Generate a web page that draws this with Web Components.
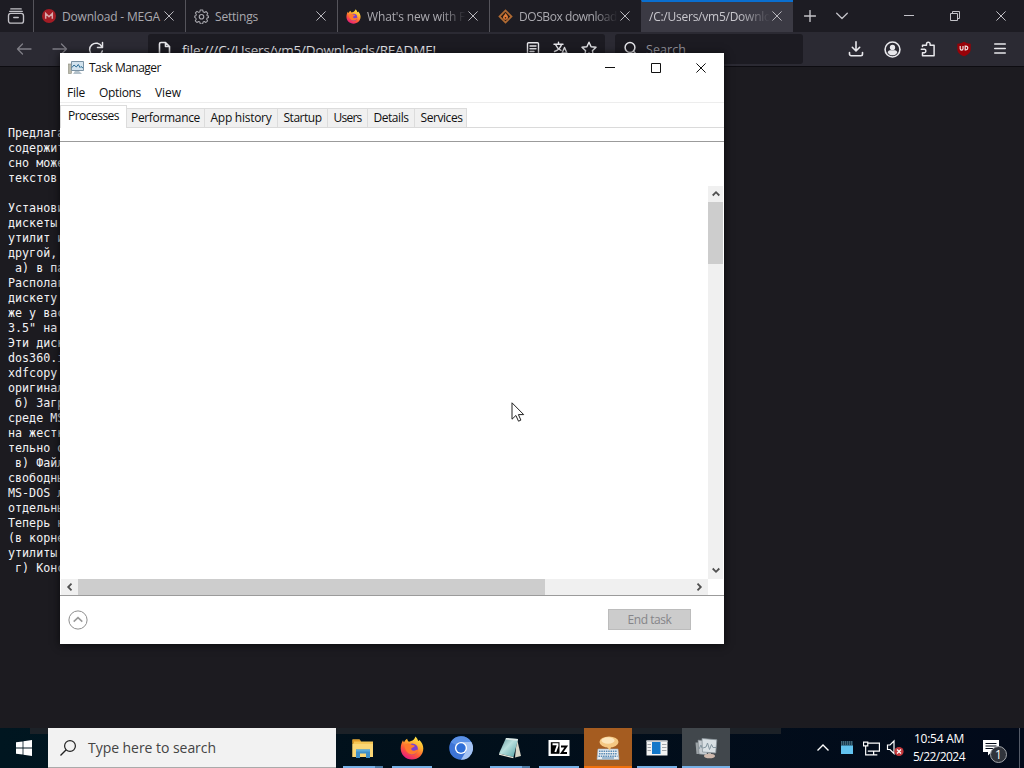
<!DOCTYPE html>
<html lang="en">
<head>
<meta charset="utf-8">
<title>Desktop</title>
<style>
html,body{margin:0;width:1024px;height:768px;overflow:hidden;background:#1c1b20;font-family:"Open Sans","Noto Sans",sans-serif;font-size:12px}
</style>
</head>
<body>
<desk-top></desk-top>
<script>
const define = (name, html, setup) => customElements.define(name, class extends HTMLElement {
  connectedCallback() {
    if (this.shadowRoot) return;
    const t = document.createElement('template');
    t.innerHTML = html;
    this.attachShadow({mode: 'open'}).append(t.content.cloneNode(true));
    if (setup) setup(this, this.shadowRoot);
  }
});

/* Text whose letter spacing adapts so that it takes up the width given in "w". */
define('ui-label', `<style>:host{display:block;white-space:pre;line-height:1.35;flex:none}:host([low]){padding-top:2px}span{display:inline-block}</style><span><slot></slot></span>`,
  (el, root) => {
    const w = +el.getAttribute('w');
    if (!w) return;
    const s = root.querySelector('span');
    const n = el.textContent.length;
    s.style.letterSpacing = ((w - s.getBoundingClientRect().width) / n).toFixed(3) + 'px';
    el.style.width = w + 'px';
  });

const line = (d, w = 1.3) => `<path d="${d}" fill="none" stroke="currentColor" stroke-width="${w}" stroke-linecap="round" stroke-linejoin="round"/>`;
const firefox = `<defs><linearGradient id="a" x1=".8" y1="0" x2=".25" y2="1"><stop offset="0" stop-color="#fff04a"/><stop offset=".35" stop-color="#ffb02e"/><stop offset=".65" stop-color="#ff5a36"/><stop offset="1" stop-color="#e31587"/></linearGradient></defs><path d="M12.5 4.5C14 3.5 15 2 15.5.5c1.5 1.5 2.300 3 2.700 4.500.8-.1 1-.6 1.200-1C22 6.500 23.300 9.500 23.300 12.500 23.300 19 18.300 23.500 12 23.500S.7 18.700.7 12.500c0-3.500 1-6 2.300-8.300.2 1 .6 1.600 1 2C5 4.500 6 3.500 7.200 2.800c.1 1.300.8 2.400 1.800 2.900z" fill="url(#a)"/><circle cx="12.300" cy="13" r="5.600" fill="#7a3fd0"/><path d="M4.500 9.500c2-2.300 5-2.500 7-.8 1.800.2 3 .6 3.300 1.300-.6 1.200-2.400 1.300-3.300 2.300-.8 1.300.6 2.500 2.500 2.400 2-.2 3.400-1.300 4.500-.6-1.200 3-4 4.600-7 4.300-4.200-.4-6.500-4.300-7-8.900z" fill="#ff7a2c"/>`;
const ICONS = {
  tabs: [24, line('M5 2.500h14M3.500 5.800h17', 1.600) + `<rect x="2" y="8.500" width="20" height="13" rx="3" fill="none" stroke="currentColor" stroke-width="1.800"/>` + line('M9 14h6', 1.800)],
  mega: [14, `<circle cx="7" cy="7" r="7" fill="#a31c25"/><path d="M3.700 9.700V4.500L7 7.700l3.300-3.200v5.200" fill="none" stroke="#d9a9ab" stroke-width="1.500"/>`],
  gear: [16, `<path d="M6.700 1h2.600l.4 2 1.500.7 1.800-1 1.700 1.900-1 1.700.5 1 1.500.3v1.500l-1.800.6-.4 1.200 1 1.800-1.800 1.700-1.700-1-1.300.5-.5 2H6.700l-.5-2-1.300-.5-1.800 1-1.700-1.800 1-1.700-.5-1.200L.8 9V7.500l1.200-.4.5-1.200-1-1.700L3.200 2.500l1.700 1.100 1.300-.5z" fill="none" stroke="currentColor" stroke-width="1.100" stroke-linejoin="round"/><circle cx="8" cy="8.200" r="2.400" fill="none" stroke="currentColor" stroke-width="1.200"/>`],
  firefox: [24, firefox],
  dosbox: [16, `<path d="M8 .3 15.700 8 8 15.700.3 8z" fill="#b06a33"/><path d="M8 3 13 8 8 13 3 8z" fill="#2b1c14"/><path d="M8 4c.2 1.600 3 2.700 2.600 5.200C10.300 10.700 9 11.500 8 11.500s-2.700-.8-2.700-2.500C5.300 7.200 7.500 6.500 8 4z" fill="#e07b37"/><circle cx="8" cy="9.300" r=".9" fill="#2b1c14"/>`],
  close: [10, line('M.7.7l8.600 8.600M9.300.7.7 9.300', 1)],
  plus: [12, line('M6 .5v11M.5 6h11', 1.400)],
  down: [12, line('M.7 3.300 6 8.500l5.300-5.200', 1.300)],
  min: [10, `<path d="M0 4h10v1H0z" fill="currentColor"/>`],
  restore: [10, `<path d="M.5 2.500h7v7h-7zM2.500 2.500v-2h7v7h-2" fill="none" stroke="currentColor"/>`],
  max: [10, `<path d="M.5.5h9v9h-9z" fill="none" stroke="currentColor"/>`],
  back: [16, line('M1.500 8h13.500M6.500 3l-5 5 5 5', 1.300)],
  forward: [16, line('M14.500 8H1M9.500 3l5 5-5 5', 1.300)],
  reload: [16, line('M14.500 1.500v5h-5M13.900 6A6.400 6.400 0 1 0 14.300 10', 1.500)],
  page: [16, line('M3.500 14.500V3a1.500 1.500 0 0 1 1.500-1.500h4.500L13.500 5.500v9zM9.500 1.500v4h4', 1.600)],
  reader: [16, line('M3.500 1.700h9a1 1 0 0 1 1 1v10.600a1 1 0 0 1-1 1h-9a1 1 0 0 1-1-1V2.700a1 1 0 0 1 1-1zM5 5h6M5 7.700h6M5 10.500h4', 1.400)],
  translate: [16, line('M1 3.200h9M5.500 1.200v2M8.500 3.500C7.500 7 4.500 9.500 1.500 10.500M2.800 4C4 7 6 8.500 8 9.300M8 14.500l3.500-8 3.500 8M9.200 12h4.600', 1.400)],
  star: [16, line('M8 1.200l2.100 4.500 4.900.6-3.600 3.400.9 4.900L8 12.200l-4.300 2.400.9-4.900L1 6.300l4.900-.6z', 1.400)],
  search: [16, `<circle cx="7" cy="6.500" r="4.900" fill="none" stroke="currentColor" stroke-width="1.500"/>` + line('M10.500 10.200l4 4.300', 1.500)],
  download: [16, line('M8 .8v8.900M4.300 6.300 8 10l3.700-3.700M1.500 11.500v1.500a1.700 1.700 0 0 0 1.700 1.700h9.600a1.700 1.700 0 0 0 1.700-1.700v-1.500', 1.600)],
  account: [16, `<circle cx="8" cy="8" r="7" fill="none" stroke="currentColor" stroke-width="1.500"/><circle cx="8" cy="6" r="2.500" fill="currentColor"/><path d="M3.500 11c0-1.500 1-2.300 2.200-2.300h4.600c1.200 0 2.200.8 2.200 2.300-1 1.500-2.500 2.500-4.500 2.500S4.500 12.500 3.500 11z" fill="currentColor"/>`],
  puzzle: [16, line('M2.500 5.500V4.300h4V3a1.800 1.800 0 0 1 3.600 0v1.300h4v10.400H2.500v-3H4.500a1.800 1.800 0 0 0 0-3.500H1.300', 1.500)],
  ublock: [16, `<path d="M8 .8c2 1.300 4 1.900 6.700 1.900v5.200c0 3.500-2.500 5.700-6.700 7.400-4.200-1.700-6.700-3.900-6.700-7.400V2.700C4 2.700 6 2.100 8 .8z" fill="#980208"/><path d="M4.200 5v2.700a1.400 1.400 0 0 0 2.800 0V5M9.200 5.100v3.800h.7a1.900 1.900 0 0 0 0-3.800z" fill="none" stroke="#f0e4e4" stroke-width="1.200"/>`],
  menu: [12, line('M.7 1h10.600M.7 5.500h10.600M.7 10h10.600', 1.500)],
  tm: [16, `<rect x=".5" y="4" width="3" height="9.500" fill="#b9b9ac" stroke="#8a8a7c" stroke-width=".6"/><path d="M3.500 1.500h12v9h-12z" fill="#d3e3ee" stroke="#7b92a3"/><path d="M4 7.500l2-2.500 2.300 2 2-2.500 1.700 3 1-1 2 1.500" fill="none" stroke="#2c6d94" stroke-width="1"/><path d="M7 11h4l3 3H5z" fill="#b3c1ca"/>`],
  circleup: [20, `<circle cx="10" cy="10" r="9.100" fill="none" stroke="#8e8e8e" stroke-width="1"/><path d="M5.700 11.700 10 7.700l4.300 4" fill="none" stroke="#999" stroke-width="1.600"/>`],
  aup: [8, `<path d="M.7 5.500 4 2.200l3.300 3.300" fill="none" stroke="#505050" stroke-width="1.800"/>`],
  adown: [8, `<path d="M.7 2.500 4 5.800l3.300-3.300" fill="none" stroke="#505050" stroke-width="1.800"/>`],
  aleft: [8, `<path d="M5.500.7 2.200 4l3.300 3.300" fill="none" stroke="#505050" stroke-width="1.800"/>`],
  aright: [8, `<path d="M2.500.7 5.800 4 2.500 7.300" fill="none" stroke="#505050" stroke-width="1.800"/>`],
  win: [16, `<path d="M0 2.300 6.600 1.400v6.200H0zM7.400 1.300 16 0v7.600H7.400zM0 8.400h6.600v6.200L0 13.700zM7.400 8.400H16V16l-8.600-1.300z" fill="#fff"/>`],
  lens: [16, `<circle cx="10" cy="6" r="5.400" fill="none" stroke="#222" stroke-width="1.200"/><path d="M6.200 9.800.5 15.500" stroke="#222" stroke-width="1.300"/>`],
  explorer: [24, `<path d="M1.500 3.500h7l1.500 2h12v15.500h-20.500z" fill="#f6c755"/><path d="M1.500 3.500h7l1.500 2H3v2H1.500z" fill="#e09a28"/><path d="M1.500 8h20.500v13H1.500z" fill="#fbd775"/><path d="M5 22v-8.500h14V22h-4v-4.500H9V22z" fill="#3f8fc8"/><path d="M5 13.500h14v2H5z" fill="#5aaadb"/>`],
  chromium: [24, `<circle cx="12" cy="12" r="11.800" fill="#3d74d6"/><path d="M12 6h10.400A11.800 11.800 0 0 1 12 23.800L17.200 15z" fill="#a5c4f4"/><path d="M12 .2A11.800 11.800 0 0 1 22.300 6H12a6 6 0 0 0-5.200 3L1.700 6.200A11.800 11.800 0 0 1 12 .2z" fill="#5b91e6"/><circle cx="12" cy="12" r="6.100" fill="#fff"/><circle cx="12" cy="12" r="4.700" fill="#2f6fd8"/>`],
  notepad: [24, `<defs><linearGradient id="n" x1="0" y1="0" x2="1" y2="1"><stop offset="0" stop-color="#5d9298"/><stop offset=".45" stop-color="#b9e0de"/><stop offset="1" stop-color="#4f9da1"/></linearGradient></defs><path d="M19 3l4 17-6 1.500z" fill="#d8d6c8"/><path d="M8 2l12 1-4.500 18L1 17.500z" fill="url(#n)"/><path d="M8 2l12 1-.4 1.700-12-1.200z" fill="#dfe9e7"/><path d="M1 17.500 15.500 21l-.2 1.300L1 18.700z" fill="#eceade"/>`],
  seven: [24, `<path d="M1.500 4h21v16h-21z" fill="#fff"/><path d="M3.800 6.200h8.700v11.600H3.800z" fill="#000"/><path d="M5.500 8.300h5v1.500L8.300 16" fill="none" stroke="#fff" stroke-width="1.900"/><path d="M14 10.500h5.300L14.700 17H20" fill="none" stroke="#000" stroke-width="1.900"/>`],
  keyboard: [24, `<path d="M2 13h20l1 10.500H1z" fill="#e9edf0" stroke="#a0b4c4" stroke-width=".6"/><path d="M3 15.200h18M3 17.800h18M2.500 20.200h19" stroke="#5689b5" stroke-width="1.500" stroke-dasharray="1.500 .8"/><path d="M6 22h12" stroke="#5689b5" stroke-width="1"/><ellipse cx="13" cy="6" rx="9.500" ry="5.600" fill="#f5c883"/><ellipse cx="12" cy="4.500" rx="6.500" ry="3.300" fill="#fde6bc"/><path d="M11 11h4l-1 3.500z" fill="#f5c883"/>`],
  app: [24, `<path d="M1.500 4.500h21v15h-21z" fill="#f3f3f3"/><path d="M1.500 4.500h21V6h-21z" fill="#c9cdd0"/><path d="M7 6h8.500v12H7z" fill="#1277c9"/><path d="M2.500 8.500H6M2.500 11.500H6M2.500 14.500H6M17 8.500h4.500M17 11.500h4.500M17 14.500h4.500" stroke="#a2a6aa" stroke-width="1"/>`],
  tmbig: [24, `<path d="M1.500 6.500h4L6 18H2.500z" fill="#9ca3a7"/><path d="M4 4l9 1v14l-8-1z" fill="#c5cbd0" stroke="#737c82" stroke-width=".6"/><path d="M8 2.500 22.800 3.800 21.700 17 8.500 16z" fill="#d9e0e4" stroke="#8c969c" stroke-width=".8"/><path d="M9 12l3-1 1.500-4 2 6.500 2-5 1.500 3h3M5 13l2-4 1 3" fill="none" stroke="#8496a0" stroke-width="1"/><path d="M14 17h3v2h-3z" fill="#aaa"/><ellipse cx="15.500" cy="20" rx="5.500" ry="2.300" fill="#cfb9ad"/>`],
  up: [12, `<path d="M.5 8.500 6 3l5.500 5.500" fill="none" stroke="#fff" stroke-width="1.400"/>`],
  tray: [14, `<path d="M1 0h12v13H1z" fill="#62c3ef"/><path d="M1 0h12v4.500H1z" fill="#183d52"/><path d="M1 1h12M1 3h12" stroke="#88a4b0" stroke-width=".8" stroke-dasharray="1 1"/>`],
  net: [16, `<path d="M4.500 3h11v7.500h-11M10 10.500v3M6.500 14h7" fill="none" stroke="#fff" stroke-width="1.200"/><path d="M.5 2h4v3.500h-4zM2.500 5.500V14h4" fill="none" stroke="#fff" stroke-width="1.100"/>`],
  sound: [18, `<path d="M1.500 6H4l4-4v12.500L4 10.500H1.500z" fill="none" stroke="#fff" stroke-width="1.200"/><circle cx="13" cy="12.500" r="4.600" fill="#c3373b"/><path d="M11 10.500l4 4M15 10.500l-4 4" stroke="#fff" stroke-width="1.200"/>`],
  note: [16, `<path d="M0 0h16v12H8.500L5 15.500V12H0z" fill="#fff"/><path d="M2.500 3.500h11M2.500 6h11M2.500 8.500h8" stroke="#020a18" stroke-width="1.200"/>`],
  cursor: [20, `<path d="M1 .8v16.400l3.900-3.700 2.600 5.700 2.400-1.100-2.500-5.500h5.300z" fill="#fff" stroke="#222" stroke-width="1" stroke-linejoin="round"/>`]
};
define('ui-icon', `<style>:host{display:block;flex:none;line-height:0}svg{display:block}</style>`, (el, root) => {
  const [box, body] = ICONS[el.getAttribute('name')];
  const s = el.getAttribute('size') || box;
  root.innerHTML += `<svg width="${s}" height="${s}" viewBox="0 0 ${box} ${box}">${body}</svg>`;
});

define('ui-button', `<style>:host{display:flex;align-items:center;justify-content:center;flex:none;width:36px;height:100%}</style><slot></slot>`);

define('browser-tab', `<style>
:host{display:flex;align-items:center;box-sizing:border-box;width:152px;height:32px;padding:0 11px 0 8px;border-left:1px solid #55545b;color:#aaa9af;overflow:hidden;flex:none}
:host([active]){background:#3b3a44;border-left-color:#3b3a44;border-top:2px solid #0a6fd0;padding:0 11px 2px 7px;color:#c8c7cd}
::slotted([slot=icon]){margin-right:6px}
.t{flex:1;min-width:0;overflow:hidden;margin-right:2px}
:host([fade]) .t{-webkit-mask-image:linear-gradient(90deg,#000 75%,transparent);mask-image:linear-gradient(90deg,#000 75%,transparent)}
ui-icon.x{color:#b9b8be}
</style><slot name="icon"></slot><div class="t"><slot></slot></div><ui-icon class="x" name="close"></ui-icon>`);

define('browser-field', `<style>:host{display:flex;align-items:center;box-sizing:border-box;height:30px;background:#1c1b22;border-radius:3px;padding-left:8px;flex:none;color:#e6e6ea}</style><slot></slot>`);

define('browser-window', `<style>
:host{display:flex;flex-direction:column;height:728px}
.tabs{display:flex;height:32px;background:#1d1c23;color:#c3c2c8}
.nav{display:flex;height:35px;background:#2b2a33;color:#e8e8ec;align-items:center;border-bottom:1px solid #0d0c11;box-sizing:border-box;padding-left:6px}
.dim{color:#7f7e86}
.sp{flex:1}
.url{width:457px;margin-left:34px}
.url .ic{display:flex;gap:12px;margin-left:89px}
.url ui-label{margin-left:10px}
.search{width:188px;margin-left:10px}
.search ui-label{margin-left:7px;color:#96959d}
pre{margin:0;padding:59px 0 0 8px;font:11.7px/15px "DejaVu Sans Mono","Liberation Mono",monospace;color:#f2f2f4;flex:1}
</style>
<div class="tabs">
<ui-button style="width:32px;margin-right:1px"><ui-icon name="tabs" size="18"></ui-icon></ui-button>
<browser-tab><ui-icon slot="icon" name="mega"></ui-icon><ui-label low w="98">Download - MEGA</ui-label></browser-tab>
<browser-tab><ui-icon slot="icon" name="gear" size="15"></ui-icon><ui-label low w="43">Settings</ui-label></browser-tab>
<browser-tab fade><ui-icon slot="icon" name="firefox" size="15"></ui-icon><ui-label low w="101">What's new with Fi</ui-label></browser-tab>
<browser-tab fade><ui-icon slot="icon" name="dosbox" size="15"></ui-icon><ui-label low w="98">DOSBox download</ui-label></browser-tab>
<browser-tab active fade><ui-label low w="122">/C:/Users/vm5/Downlo</ui-label></browser-tab>
<ui-button style="width:33px"><ui-icon name="plus"></ui-icon></ui-button>
<ui-button style="width:31px"><ui-icon name="down"></ui-icon></ui-button>
<div class="sp"></div>
<ui-button style="width:46px"><ui-icon name="min"></ui-icon></ui-button>
<ui-button style="width:46px"><ui-icon name="restore"></ui-icon></ui-button>
<ui-button style="width:46px"><ui-icon name="close"></ui-icon></ui-button>
</div>
<div class="nav">
<ui-button class="dim"><ui-icon name="back"></ui-icon></ui-button>
<ui-button class="dim"><ui-icon name="forward"></ui-icon></ui-button>
<ui-button><ui-icon name="reload"></ui-icon></ui-button>
<browser-field class="url"><ui-icon name="page"></ui-icon><ui-label low w="254" style="font-size:13.5px">file:///C:/Users/vm5/Downloads/README!</ui-label><div class="ic"><ui-icon name="reader"></ui-icon><ui-icon name="translate"></ui-icon><ui-icon name="star"></ui-icon></div></browser-field>
<browser-field class="search"><ui-icon name="search"></ui-icon><ui-label low w="40" style="font-size:12.500px">Search</ui-label></browser-field>
<div class="sp"></div>
<ui-button><ui-icon name="download"></ui-icon></ui-button>
<ui-button><ui-icon name="account" size="17"></ui-icon></ui-button>
<ui-button><ui-icon name="puzzle"></ui-icon></ui-button>
<ui-button><ui-icon name="ublock"></ui-icon></ui-button>
<ui-button style="margin-right:6px"><ui-icon name="menu"></ui-icon></ui-button>
</div>
<pre>Предлага
содержит
сно може
текстов

Установи
дискеты
утилит и
другой,
 а) в па
Располаг
дискету
же у вас
3.5" на
Эти диск
dos360.i
xdfcopy
оригинал
 б) Загр
среде MS
на жестк
тельно о
 в) Файл
свободны
MS-DOS л
отдельны
Теперь н
(в корне
утилиты
 г) Конс</pre>`);

define('tm-tab', `<style>
:host{display:flex;align-items:center;justify-content:center;box-sizing:border-box;height:19px;background:#f0f0f0;border:1px solid #dcdcdc;border-width:1px 1px 0 0;flex:none}
:host([active]){height:23px;background:#fff;margin-bottom:-1px;border-left-width:1px;padding-bottom:1px}
</style><slot></slot>`);

define('scroll-bar', `<style>
:host{display:flex;background:#f0f0f0;align-items:stretch}
:host([vertical]){flex-direction:column}
ui-button{width:17px;height:16px}
ui-button:last-child{margin-right:1px}
:host([vertical]) ui-button{width:15px;margin:0}
:host([vertical]) ui-button:last-child{margin-bottom:1px}
.th{background:#cdcdcd;flex:none}.sp{flex:1}
</style><ui-button><ui-icon name="aleft"></ui-icon></ui-button><div class="th"></div><div class="sp"></div><ui-button><ui-icon name="aright"></ui-icon></ui-button>`,
  (el, root) => {
    const v = el.hasAttribute('vertical');
    root.querySelector('.th').style[v ? 'height' : 'width'] = el.getAttribute('thumb') + 'px';
    if (v) root.querySelectorAll('ui-button').forEach((b, i) => {
      b.innerHTML = `<ui-icon name="${i ? 'adown' : 'aup'}"></ui-icon>`;
    });
  });

define('task-manager', `<style>
:host{display:flex;flex-direction:column;background:#fff;color:#111;box-sizing:border-box}
.title{display:flex;height:29px;align-items:center;padding-left:8px}
.title ui-label{margin-left:5px}
.sp{flex:1}
.title ui-button{width:46px}
.title ui-button:nth-of-type(2){width:45px}
.menu{display:flex;height:21px;align-items:center;padding-left:7px;gap:14px;border-bottom:1px solid #ededed;box-sizing:border-box}
.tabs{display:flex;align-items:flex-end;height:25px;box-sizing:border-box;border-bottom:1px solid #dadada}
.head{height:13px;border-bottom:1px solid #9b9b9b}
.body{display:grid;grid-template-columns:647px 15px;grid-template-rows:437px 16px;padding-left:1px;height:453px}
.list{grid-row:1}
.v{grid-column:2;margin-top:44px}
.foot{display:flex;align-items:center;flex:1;border-top:1px solid #9b9b9b;padding:0 33px 0 8px}
.foot ui-icon{margin-bottom:1px}
button{font:inherit;width:83px;height:21px;box-sizing:border-box;padding:0;border:1px solid #bcbcbc;background:#cccccc;color:#858589;display:flex;align-items:center;justify-content:center;margin-bottom:1px}
</style>
<div class="title"><ui-icon name="tm"></ui-icon><ui-label low w="72">Task Manager</ui-label><div class="sp"></div>
<ui-button><ui-icon name="min"></ui-icon></ui-button><ui-button><ui-icon name="max"></ui-icon></ui-button><ui-button><ui-icon name="close"></ui-icon></ui-button></div>
<div class="menu"><ui-label low w="18">File</ui-label><ui-label low w="42">Options</ui-label><ui-label low w="26">View</ui-label></div>
<div class="tabs">
<tm-tab active style="width:67px"><ui-label w="51">Processes</ui-label></tm-tab>
<tm-tab style="width:78px"><ui-label w="69">Performance</ui-label></tm-tab>
<tm-tab style="width:73px"><ui-label w="61">App history</ui-label></tm-tab>
<tm-tab style="width:50px"><ui-label w="38">Startup</ui-label></tm-tab>
<tm-tab style="width:40px"><ui-label w="28">Users</ui-label></tm-tab>
<tm-tab style="width:47px"><ui-label w="35">Details</ui-label></tm-tab>
<tm-tab style="width:52px;padding-left:2px"><ui-label w="42">Services</ui-label></tm-tab>
</div>
<div class="head"></div>
<div class="body"><div class="list"></div><scroll-bar class="v" vertical thumb="62"></scroll-bar><scroll-bar thumb="467"></scroll-bar></div>
<div class="foot"><ui-icon name="circleup"></ui-icon><div class="sp"></div><button><ui-label low w="44">End task</ui-label></button></div>`);

define('app-slot', `<style>
:host{display:flex;position:relative;align-items:center;justify-content:center;width:48px;height:40px;flex:none}
:host([alert]){background:#a55c20}
:host([active]){background:#41474c}
i{position:absolute;bottom:0;left:4px;right:4px;height:2px;background:#76b0e6;display:none}
:host([open]) i{display:block}
:host([alert]) i,:host([active]) i{left:0;right:0}
:host([alert]) i{background:#f0700c}
:host([stack]) i{border-right:8px solid #4d7ba5}
</style><div class="pic"></div><i></i>`, (el, root) => {
  root.querySelector('.pic').innerHTML = `<ui-icon name="${el.getAttribute('icon')}" size="24"></ui-icon>`;
});

define('task-bar', `<style>
:host{display:flex;height:40px;background:linear-gradient(90deg,#001620,#01101b 40%,#020a1a);align-items:stretch;position:relative;color:#fff}
.strip{position:absolute;left:30px;width:751px;top:0;height:6px;background:#1c2127}
.start{width:48px}
.search{position:relative;display:flex;align-items:center;width:288px;box-sizing:border-box;background:#f2f2f2;border-bottom:1px solid #aaa;padding-left:12px;color:#444}
.search ui-label{margin-left:12px;font-size:14px}
.items{display:flex;gap:1px;margin-left:3px}
.sp{flex:1}
.tray{display:flex;align-items:center}
.tray ui-button{width:24px}
.clock{display:flex;flex-direction:column;align-items:center;justify-content:center;gap:2px;width:60px;margin-left:2px}
.note{position:relative;width:47px;margin-left:3px}
.note ui-icon{margin-right:10px}
.badge{position:absolute;left:18px;top:18px;width:15px;height:15px;border:1px solid #a2a5aa;border-radius:50%;background:#30343c;font-size:12px;line-height:15px;text-align:center}
.edge{width:5px;border-left:1px solid #555b68;box-sizing:border-box}
</style>
<div class="strip"></div>
<ui-button class="start"><ui-icon name="win"></ui-icon></ui-button>
<div class="search"><ui-icon name="lens"></ui-icon><ui-label low w="128">Type here to search</ui-label></div>
<div class="items"></div>
<div class="sp"></div>
<div class="tray"><ui-button><ui-icon name="up"></ui-icon></ui-button><ui-button><ui-icon name="tray"></ui-icon></ui-button><ui-button><ui-icon name="net" size="17"></ui-icon></ui-button><ui-button><ui-icon name="sound"></ui-icon></ui-button></div>
<div class="clock"><ui-label w="50">10:54 AM</ui-label><ui-label w="52">5/22/2024</ui-label></div>
<ui-button class="note"><ui-icon name="note"></ui-icon><div class="badge">1</div></ui-button>
<div class="edge"></div>`,
  (el, root) => {
    const items = [['explorer', 'open stack'], ['firefox', 'open'], ['chromium', ''], ['notepad', 'open stack'], ['seven', 'open'], ['keyboard', 'open alert'], ['app', 'open'], ['tmbig', 'open active']];
    root.querySelector('.items').innerHTML = items.map(([n, a]) => `<app-slot icon="${n}" ${a}></app-slot>`).join('');
  });

define('desk-top', `<style>
:host{display:block;position:relative;width:1024px;height:768px;overflow:hidden;background:#1c1b20}
task-manager{position:absolute;left:60px;top:53px;width:664px;height:591px;box-shadow:0 1px 8px #0a0a0c}
.cur{position:absolute;left:511px;top:402px}
</style>
<browser-window></browser-window>
<task-bar></task-bar>
<task-manager></task-manager>
<ui-icon class="cur" name="cursor"></ui-icon>`);
</script>
</body>
</html>
